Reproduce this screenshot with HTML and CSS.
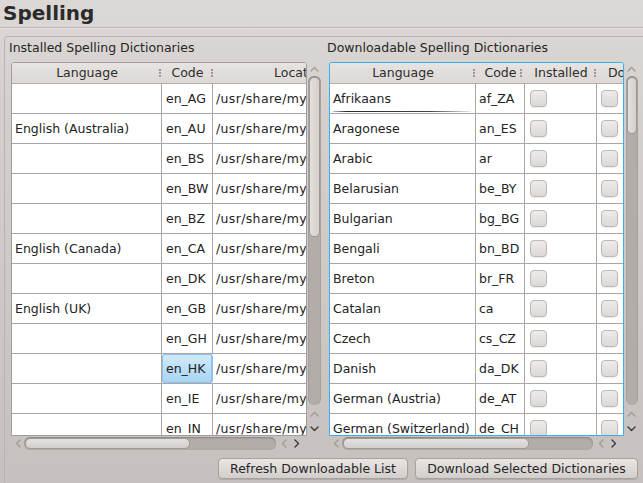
FILE: index.html
```html
<!DOCTYPE html>
<html>
<head>
<meta charset="utf-8">
<link rel="stylesheet" href="styles.css">
</head>
<body>
<div class="window">
  <h1 class="title">Spelling</h1>
  <div class="sep"></div>
  <div class="group">
    <div class="panels">
      <section class="panel">
        <div class="panel-label">Installed Spelling Dictionaries</div>
        <div class="view view-left">
          <div class="box">
            <div class="row head">
              <div class="c l1"><span>Language</span><i class="grip"></i></div>
              <div class="c l2"><span>Code</span><i class="grip"></i></div>
              <div class="c l3"><span>Location</span></div>
            </div>
            <div class="row"><div class="c l1"></div><div class="c l2">en_AG</div><div class="c l3">/usr/share/myspell/dicts</div></div>
            <div class="row"><div class="c l1">English (Australia)</div><div class="c l2">en_AU</div><div class="c l3">/usr/share/myspell/dicts</div></div>
            <div class="row"><div class="c l1"></div><div class="c l2">en_BS</div><div class="c l3">/usr/share/myspell/dicts</div></div>
            <div class="row"><div class="c l1"></div><div class="c l2">en_BW</div><div class="c l3">/usr/share/myspell/dicts</div></div>
            <div class="row"><div class="c l1"></div><div class="c l2">en_BZ</div><div class="c l3">/usr/share/myspell/dicts</div></div>
            <div class="row"><div class="c l1">English (Canada)</div><div class="c l2">en_CA</div><div class="c l3">/usr/share/myspell/dicts</div></div>
            <div class="row"><div class="c l1"></div><div class="c l2">en_DK</div><div class="c l3">/usr/share/myspell/dicts</div></div>
            <div class="row"><div class="c l1">English (UK)</div><div class="c l2">en_GB</div><div class="c l3">/usr/share/myspell/dicts</div></div>
            <div class="row"><div class="c l1"></div><div class="c l2">en_GH</div><div class="c l3">/usr/share/myspell/dicts</div></div>
            <div class="row"><div class="c l1"></div><div class="c l2 sel">en_HK</div><div class="c l3">/usr/share/myspell/dicts</div></div>
            <div class="row"><div class="c l1"></div><div class="c l2">en_IE</div><div class="c l3">/usr/share/myspell/dicts</div></div>
            <div class="row"><div class="c l1"></div><div class="c l2">en_IN</div><div class="c l3">/usr/share/myspell/dicts</div></div>
          </div>
          <div class="vscroll">
            <div class="arr"><svg width="9" height="6" viewBox="0 0 9 6"><polyline points="1,5 4.5,1.5 8,5" class="dim"/></svg></div>
            <div class="vtrack"><div class="vhandle hl"></div></div>
            <div class="arr a2"><svg width="9" height="6" viewBox="0 0 9 6"><polyline points="1,5 4.5,1.5 8,5" class="dim"/></svg></div>
            <div class="arr a3"><svg width="9" height="6" viewBox="0 0 9 6"><polyline points="1,1 4.5,4.5 8,1" class="dark"/></svg></div>
          </div>
          <div class="hscroll">
            <div class="harr"><svg width="6" height="9" viewBox="0 0 6 9"><polyline points="5,1 1.5,4.5 5,8" class="dim"/></svg></div>
            <div class="htrack"><div class="hhandle hl"></div></div>
            <div class="harr"><svg width="6" height="9" viewBox="0 0 6 9"><polyline points="5,1 1.5,4.5 5,8" class="dim"/></svg></div>
            <div class="harr"><svg width="6" height="9" viewBox="0 0 6 9"><polyline points="1,1 4.5,4.5 1,8" class="dark"/></svg></div>
          </div>
          <div class="corner"></div>
        </div>
      </section>

      <section class="panel">
        <div class="panel-label">Downloadable Spelling Dictionaries</div>
        <div class="view view-right">
          <div class="box focus">
            <div class="row head">
              <div class="c r1"><span>Language</span><i class="grip"></i></div>
              <div class="c r2"><span>Code</span><i class="grip"></i></div>
              <div class="c r3"><span>Installed</span><i class="grip"></i></div>
              <div class="c r4"><span>Download</span></div>
            </div>
            <div class="row"><div class="c r1 cur">Afrikaans</div><div class="c r2">af_ZA</div><div class="c r3"><b class="cb"></b></div><div class="c r4"><b class="cb"></b></div></div>
            <div class="row"><div class="c r1">Aragonese</div><div class="c r2">an_ES</div><div class="c r3"><b class="cb"></b></div><div class="c r4"><b class="cb"></b></div></div>
            <div class="row"><div class="c r1">Arabic</div><div class="c r2">ar</div><div class="c r3"><b class="cb"></b></div><div class="c r4"><b class="cb"></b></div></div>
            <div class="row"><div class="c r1">Belarusian</div><div class="c r2">be_BY</div><div class="c r3"><b class="cb"></b></div><div class="c r4"><b class="cb"></b></div></div>
            <div class="row"><div class="c r1">Bulgarian</div><div class="c r2">bg_BG</div><div class="c r3"><b class="cb"></b></div><div class="c r4"><b class="cb"></b></div></div>
            <div class="row"><div class="c r1">Bengali</div><div class="c r2">bn_BD</div><div class="c r3"><b class="cb"></b></div><div class="c r4"><b class="cb"></b></div></div>
            <div class="row"><div class="c r1">Breton</div><div class="c r2">br_FR</div><div class="c r3"><b class="cb"></b></div><div class="c r4"><b class="cb"></b></div></div>
            <div class="row"><div class="c r1">Catalan</div><div class="c r2">ca</div><div class="c r3"><b class="cb"></b></div><div class="c r4"><b class="cb"></b></div></div>
            <div class="row"><div class="c r1">Czech</div><div class="c r2">cs_CZ</div><div class="c r3"><b class="cb"></b></div><div class="c r4"><b class="cb"></b></div></div>
            <div class="row"><div class="c r1">Danish</div><div class="c r2">da_DK</div><div class="c r3"><b class="cb"></b></div><div class="c r4"><b class="cb"></b></div></div>
            <div class="row"><div class="c r1">German (Austria)</div><div class="c r2">de_AT</div><div class="c r3"><b class="cb"></b></div><div class="c r4"><b class="cb"></b></div></div>
            <div class="row"><div class="c r1">German (Switzerland)</div><div class="c r2">de_CH</div><div class="c r3"><b class="cb"></b></div><div class="c r4"><b class="cb"></b></div></div>
          </div>
          <div class="vscroll">
            <div class="arr"><svg width="9" height="6" viewBox="0 0 9 6"><polyline points="1,5 4.5,1.5 8,5" class="dim"/></svg></div>
            <div class="vtrack"><div class="vhandle hr"></div></div>
            <div class="arr a2"><svg width="9" height="6" viewBox="0 0 9 6"><polyline points="1,5 4.5,1.5 8,5" class="dim"/></svg></div>
            <div class="arr a3"><svg width="9" height="6" viewBox="0 0 9 6"><polyline points="1,1 4.5,4.5 8,1" class="dark"/></svg></div>
          </div>
          <div class="hscroll">
            <div class="harr"><svg width="6" height="9" viewBox="0 0 6 9"><polyline points="5,1 1.5,4.5 5,8" class="dim"/></svg></div>
            <div class="htrack"><div class="hhandle hr"></div></div>
            <div class="harr"><svg width="6" height="9" viewBox="0 0 6 9"><polyline points="5,1 1.5,4.5 5,8" class="dim"/></svg></div>
            <div class="harr"><svg width="6" height="9" viewBox="0 0 6 9"><polyline points="1,1 4.5,4.5 1,8" class="dark"/></svg></div>
          </div>
          <div class="corner"></div>
        </div>
      </section>
    </div>
    <div class="buttons">
      <button class="btn btn-refresh">Refresh Downloadable List</button>
      <button class="btn btn-download">Download Selected Dictionaries</button>
    </div>
  </div>
</div>
</body>
</html>
```
FILE: styles.css
```css
* { box-sizing: border-box; margin: 0; padding: 0; }
html, body { width: 643px; height: 483px; overflow: hidden; }
body {
  font-family: "DejaVu Sans", sans-serif;
  font-size: 12.5px;
  color: #232323;
  background: linear-gradient(#dcd8d6 0px, #d3cfcc 120px, #c6c1be 483px);
}
.window { height: 483px; display: flex; flex-direction: column; }
.title {
  font-size: 20px;
  font-weight: bold;
  height: 27px;
  line-height: 27px;
  padding-left: 3px;
  color: #2b2b2b;
}
.sep { height: 2px; border-top: 1px solid #bcb7b4; border-bottom: 1px solid #e4e1df; }
.group {
  flex: 1;
  margin: 7px -6px 0 4px;
  border: 1px solid #b9b4b1;
  border-bottom: none;
  border-radius: 4px 4px 0 0;
  padding: 0 10px 0 4px;
  display: flex;
  flex-direction: column;
}
.panels { display: grid; grid-template-columns: 313px 314px; column-gap: 5px; }
.panel-label { height: 25px; line-height: 22px; color: #262626; }
.view { display: grid; padding-left: 2px; grid-template-rows: 374px 14px; }
.view-left { grid-template-columns: 296px 15px; }
.view-right { grid-template-columns: 295px 15px; }

.box {
  background: #fff;
  border: 1px solid #a29d9a;
  border-radius: 3px 3px 0 0;
  overflow: hidden;
}
.box.focus { border-color: #3daee9; box-shadow: 0 0 1px #8fcdee; }
.row {
  display: flex;
  height: 30px;
  border-bottom: 1px solid #aba6a3;
  width: max-content;
  min-width: 100%;
}
.row.head {
  height: 21px;
  background: linear-gradient(#e6e3e1, #dcd8d5);
  border-bottom: 1px solid #b3aeab;
  color: #2d2d2d;
}
.c {
  flex-shrink: 0;
  line-height: 29px;
  white-space: nowrap;
  overflow: hidden;
  border-right: 1px solid #aba6a3;
  padding-left: 3px;
  position: relative;
}
.head .c { border-right: none; line-height: 20px; text-align: center; padding-left: 0; overflow: visible; }
.grip {
  position: absolute;
  right: 0;
  top: 6px;
  width: 2px;
  height: 9px;
  background: radial-gradient(circle at 1px 1px, #9d9895 0.9px, transparent 1.1px) 0 0 / 2px 3px repeat-y;
}
.l1 { width: 150px; }
.l2 { width: 51px; padding-left: 4px; }
.l3 { width: 175px; letter-spacing: 0.35px; }
.r1 { width: 146px; }
.r2 { width: 49px; }
.r3 { width: 72px; padding-left: 5px; }
.r4 { width: 84px; padding-left: 4px; }
.head .l3 { letter-spacing: 0; }
.head .l1 .grip { right: 1px; }
.head .r1 .grip { right: 1px; }
.head .r2 .grip { right: 3px; }
.head .r3 .grip { right: 1px; }

.sel {
  background: linear-gradient(#d3ebfb, #a6d4f3);
  box-shadow: inset 0 0 0 1px #8cc3ea;
  border-radius: 3px;
  border-right-color: #8cc3ea;
}
.cur::after {
  content: "";
  position: absolute;
  left: 3px;
  right: 4px;
  bottom: 1px;
  height: 1.5px;
  background: linear-gradient(90deg, rgba(40,40,40,0.3), #2a2a2a 10%, #444 70%, rgba(60,60,60,0.1));
  border-radius: 1px;
}
.cb {
  display: inline-block;
  vertical-align: middle;
  width: 17px;
  height: 17px;
  margin-top: -3px;
  border: 1px solid #bdb8b5;
  border-radius: 4px;
  background: linear-gradient(#eeebe9, #dcd8d5);
  box-shadow: 0 1px 1px rgba(0,0,0,0.08);
}

.vscroll { display: flex; flex-direction: column; }
.arr { height: 14px; display: flex; align-items: center; justify-content: center; }
.arr.a2 { height: 15px; margin-top: 1px; }
.arr.a3 { height: 15px; }
.vtrack {
  height: 329px;
  margin: 0 1px;
  border-radius: 6px;
  background: #b3adaa;
  box-shadow: inset 0 1px 2px rgba(0,0,0,0.25);
  padding: 1px;
}
.view-right .vtrack { margin: 0 1px 0 2px; }
.vhandle {
  border-radius: 5px;
  border: 1px solid #9f9996;
  background: linear-gradient(90deg, #e2dfdd, #d3cfcc);
}
.vhandle.hl { height: 160px; }
.vhandle.hr { height: 57px; }

.hscroll { display: flex; align-items: center; padding-right: 4px; }
.harr { width: 13px; height: 14px; display: flex; align-items: center; justify-content: center; flex-shrink: 0; }
.htrack {
  flex: 1;
  height: 13px;
  margin-right: 1px;
  border-radius: 6px;
  background: #b3adaa;
  box-shadow: inset 0 1px 2px rgba(0,0,0,0.25);
  padding: 1px;
}
.hhandle {
  height: 11px;
  border-radius: 5px;
  border: 1px solid #9f9996;
  background: linear-gradient(#e4e1df, #d2cecb);
}
.hhandle.hl { width: 165px; }
.hhandle.hr { width: 186px; }

svg polyline { fill: none; stroke-width: 1.4; stroke-linecap: round; stroke-linejoin: round; }
svg .dim { stroke: #a29c99; }
svg .dark { stroke: #3a3a3a; }

.buttons { display: flex; justify-content: flex-end; gap: 7px; margin-top: 8px; }
.btn {
  font-family: "DejaVu Sans", sans-serif;
  font-size: 12.5px;
  color: #262626;
  height: 21px;
  border: 1px solid #a8a29f;
  border-radius: 4px;
  background: linear-gradient(#e8e5e3, #d2cecb);
  box-shadow: 0 1px 1px rgba(0,0,0,0.12);
  line-height: 19px;
}
.btn-refresh { width: 190px; }
.btn-download { width: 223px; }
```
